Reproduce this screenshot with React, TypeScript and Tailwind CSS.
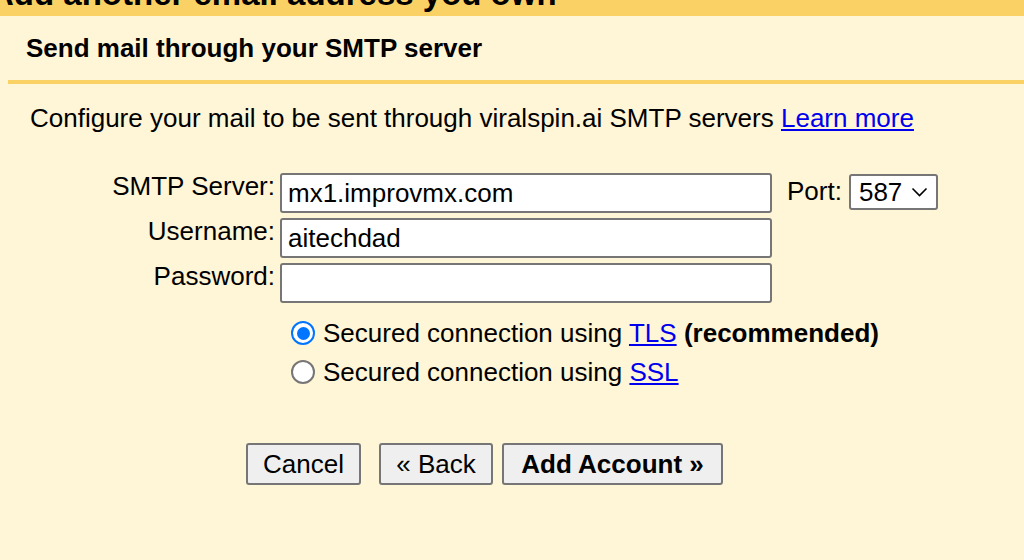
export default function App() {
  return (
    <div className="w-[1024px] h-[560px] overflow-hidden bg-[#fff5d7] text-black font-['Liberation_Sans',Arial,sans-serif]">
      <div className="h-[16px] overflow-hidden bg-[#fad165]">
        <div className="-mt-[24px] -ml-[10px] whitespace-nowrap text-[33px] font-bold leading-[36px]">
          Add another email address you own
        </div>
      </div>

      <div className="h-[64px] px-[26px] pt-[17px]">
        <h2 className="text-[26px] font-bold leading-[30px]">Send mail through your SMTP server</h2>
      </div>
      <div className="ml-[8px] h-[4px] bg-[#fad165]" />

      <p className="mt-[19px] pl-[30px] text-[26px] leading-[30px]">
        Configure your mail to be sent through viralspin.ai SMTP servers{" "}
        <a href="#" className="text-[#0000ee] underline">
          Learn more
        </a>
      </p>

      <div className="mt-[40px] grid grid-cols-[275px_492px_auto] items-start gap-x-[5px] gap-y-[5px] text-[26px]">
        <div className="-mt-[2px] text-right leading-[30px]">SMTP Server:</div>
        <Field value="mx1.improvmx.com" />
        <div className="flex items-start">
          <span className="ml-[10px] mt-[3px] leading-[30px]">Port:</span>
          <div className="ml-[7px] mt-[1px] flex h-[36px] w-[89px] items-center justify-between rounded-[3px] border-2 border-[#767676] bg-white pl-[8px] pr-[8px]">
            <span className="leading-[30px]">587</span>
            <svg width="17" height="10" viewBox="0 0 17 10" fill="none" stroke="#000" strokeWidth="1.6">
              <path d="M1.5 1.5l7 7 7-7" />
            </svg>
          </div>
        </div>

        <div className="-mt-[2px] text-right leading-[30px]">Username:</div>
        <Field value="aitechdad" />
        <div />

        <div className="-mt-[2px] text-right leading-[30px]">Password:</div>
        <Field value="" />
        <div />
      </div>

      <div className="mt-[15px] ml-[291px] flex flex-col gap-[9px] text-[26px] leading-[30px]">
        <div className="flex items-center">
          <span className="flex h-[24px] w-[24px] items-center justify-center rounded-full border-2 border-[#0075ff] bg-white">
            <span className="h-[13px] w-[13px] rounded-full bg-[#0075ff]" />
          </span>
          <span className="ml-[8px]">
            Secured connection using{" "}
            <a href="#" className="text-[#0000ee] underline">
              TLS
            </a>{" "}
            <b>(recommended)</b>
          </span>
        </div>
        <div className="flex items-center">
          <span className="h-[24px] w-[24px] rounded-full border-2 border-[#767676] bg-white" />
          <span className="ml-[8px]">
            Secured connection using{" "}
            <a href="#" className="text-[#0000ee] underline">
              SSL
            </a>
          </span>
        </div>
      </div>

      <div className="mt-[56px] ml-[246px] flex text-[26px]">
        <Btn className="w-[115px]">Cancel</Btn>
        <Btn className="ml-[18px] w-[114px]">« Back</Btn>
        <Btn className="ml-[9px] w-[221px] font-bold">Add Account »</Btn>
      </div>
    </div>
  );
}

function Field({ value }: { value: string }) {
  return (
    <div className="flex h-[40px] items-center rounded-[3px] border-2 border-[#767676] bg-white px-[6px] leading-[30px]">
      {value}
    </div>
  );
}

function Btn({ children, className = "" }: { children: React.ReactNode; className?: string }) {
  return (
    <button
      className={`h-[42px] rounded-[3px] border-2 border-[#767676] bg-[#efefef] leading-[30px] text-black ${className}`}
    >
      {children}
    </button>
  );
}
